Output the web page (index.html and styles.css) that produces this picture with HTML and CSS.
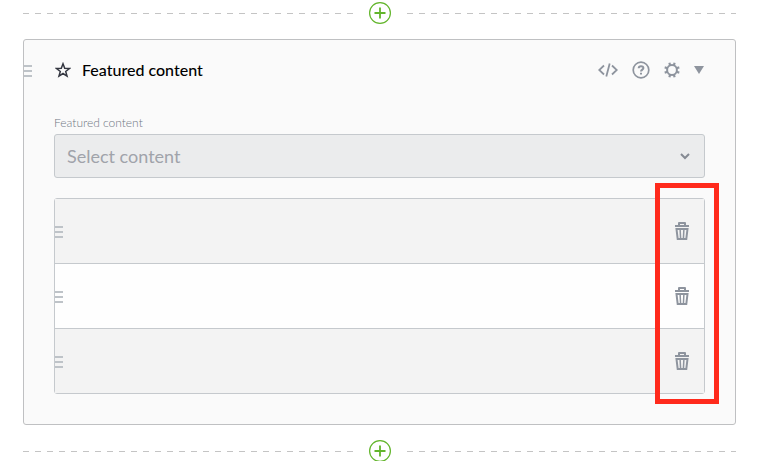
FILE: index.html
```html
<!DOCTYPE html>
<html lang="en">
<head>
  <meta charset="UTF-8">
  <meta name="viewport" content="width=device-width, initial-scale=1.0">
  <title>Featured content</title>
  <link rel="stylesheet" href="styles.css">
</head>
<body>
  <!-- Shared icons -->
  <svg class="sprite" aria-hidden="true">
    <symbol id="plus" viewBox="0 0 22 22">
      <circle cx="11" cy="11" r="10.4" fill="#fff" stroke="currentColor" stroke-width="1.2"/>
      <path d="M11 5.500v11M5.500 11h11" fill="none" stroke="currentColor" stroke-width="1.8"/>
    </symbol>
    <symbol id="trash" viewBox="0 0 14 18">
      <path d="M0 3h3V1q0-1 1-1h6q1 0 1 1v2h3v2H0zM5 2v1h4V2z" fill="currentColor" fill-rule="evenodd"/>
      <path d="M1.500 7h11L11.300 17H2.700z" fill="none" stroke="currentColor" stroke-width="2"/>
      <path d="M5.100 7l.5 10M8.900 7l-.5 10" fill="none" stroke="currentColor" stroke-width="1.5"/>
    </symbol>
  </svg>

  <main>
    <div class="divider">
      <span class="divider-line"></span>
      <button class="add-btn" type="button" aria-label="Add block above"><svg><use href="#plus"/></svg></button>
      <span class="divider-line"></span>
    </div>

    <section class="panel">
      <header class="panel-header">
        <button class="handle" type="button" aria-label="Move block"></button>
        <svg class="star" viewBox="0 0 16 16" aria-hidden="true">
          <path d="M8 1.800l1.700 4.500 4.800.2-3.800 3 1.300 4.600L8 11.500l-4 2.600 1.300-4.600-3.800-3 4.800-.2z" fill="none" stroke="currentColor" stroke-width="1.5"/>
        </svg>
        <h2>Featured content</h2>
        <div class="tools">
          <button type="button" aria-label="View code">
            <svg width="20" height="14" viewBox="0 0 20 14" fill="none" stroke="currentColor" stroke-width="1.8">
              <path d="M6 2.500L1.200 7 6 11.500M14 2.500L18.800 7 14 11.500M11.700.5L8.300 13.500"/>
            </svg>
          </button>
          <button type="button" aria-label="Help">
            <svg width="18" height="18" viewBox="0 0 18 18" fill="none" stroke="currentColor">
              <circle cx="9" cy="9" r="7.800" stroke-width="1.700"/>
              <path d="M6.700 7.200C6.700 4.500 11.400 4.500 11.400 7.100 11.400 8.600 9 8.700 9 10.600M9 11.700v1.800" stroke-width="2"/>
            </svg>
          </button>
          <button type="button" aria-label="Settings">
            <svg width="16" height="16" viewBox="0 0 16 16" fill="none" stroke="currentColor">
              <circle cx="8" cy="8" r="4.900" stroke-width="2"/>
              <path d="M6.200 3.700L5.400.7M9.800 3.700l.8-3M6.200 12.300l-.8 3M9.800 12.300l.8 3M3.700 6.200L.7 5.400M3.700 9.800l-3 .8M12.300 6.200l3-.8M12.300 9.800l3 .8" stroke-width="2.200"/>
            </svg>
          </button>
          <button type="button" aria-label="Collapse">
            <svg width="10" height="8" viewBox="0 0 10 8" fill="currentColor"><path d="M0 0h10L5 8z"/></svg>
          </button>
        </div>
      </header>

      <div class="panel-body">
        <label for="content">Featured content</label>
        <div class="select-wrap">
          <select id="content" disabled>
            <option>Select content</option>
          </select>
          <svg class="chevron" viewBox="0 0 10 7" aria-hidden="true">
            <path d="M1 1l4 4 4-4" fill="none" stroke="currentColor" stroke-width="2"/>
          </svg>
        </div>

        <div class="list-wrap">
          <ul class="items">
            <li>
              <button class="handle" type="button" aria-label="Move item 1"></button>
              <button class="delete-btn" type="button" aria-label="Delete item 1"><svg><use href="#trash"/></svg></button>
            </li>
            <li>
              <button class="handle" type="button" aria-label="Move item 2"></button>
              <button class="delete-btn" type="button" aria-label="Delete item 2"><svg><use href="#trash"/></svg></button>
            </li>
            <li>
              <button class="handle" type="button" aria-label="Move item 3"></button>
              <button class="delete-btn" type="button" aria-label="Delete item 3"><svg><use href="#trash"/></svg></button>
            </li>
          </ul>
          <div class="highlight"></div>
        </div>
      </div>
    </section>

    <div class="divider">
      <span class="divider-line"></span>
      <button class="add-btn" type="button" aria-label="Add block below"><svg><use href="#plus"/></svg></button>
      <span class="divider-line"></span>
    </div>
  </main>
</body>
</html>
```
FILE: styles.css
```css
* {
  box-sizing: border-box;
  margin: 0;
  padding: 0;
}

body {
  font-family: Lato, "Open Sans", sans-serif;
  background-color: #fff;
  color: #000;
  overflow: hidden;
}

main {
  padding: 2px 31px 0 23px;
}

button {
  display: block;
  background: none;
  border: none;
  color: inherit;
  cursor: pointer;
}

svg {
  display: block;
}

.sprite {
  display: none;
}

/* Dashed line with the add button */
.divider {
  display: flex;
  align-items: center;
  gap: 16px;
}

.divider-line {
  flex: 1;
  height: 1px;
  background: repeating-linear-gradient(to right, #c4c4c4 0 6px, transparent 6px 12px);
}

.add-btn {
  color: #62b52b;
}

.add-btn svg {
  width: 22px;
  height: 22px;
}

/* Panel */
.panel {
  margin: 15px 0;
  background-color: #fafafa;
  border: 1px solid #bfc0c2;
  border-radius: 3px;
}

.panel-header {
  display: flex;
  align-items: center;
  height: 60px;
  padding-right: 31px;
}

.handle {
  width: 8px;
  height: 12px;
  background: repeating-linear-gradient(to bottom, #bec3c8 0 2px, transparent 2px 5px);
  cursor: move;
}

.panel-header .handle,
.items .handle {
  margin-top: 2px;
}

.star {
  width: 16px;
  height: 16px;
  margin: 0 11px 0 23px;
  color: #343741;
}

h2 {
  font-size: 16px;
  font-weight: 500;
  line-height: 20px;
}

.tools {
  display: flex;
  align-items: center;
  gap: 14px;
  margin-left: auto;
  color: #8e949e;
}

.panel-body {
  padding: 16px 30px 30px;
}

label {
  display: block;
  font-size: 12px;
  font-weight: 300;
  line-height: 14px;
  margin-bottom: 4px;
  color: #707783;
}

.select-wrap {
  position: relative;
}

select {
  display: block;
  width: 100%;
  height: 44px;
  padding: 0 32px 0 12px;
  appearance: none;
  background-color: #ebeced;
  border: 1px solid #c5c9cd;
  border-radius: 3px;
  font-family: inherit;
  font-size: 18px;
  color: #a0a3aa;
  opacity: 1;
}

.chevron {
  position: absolute;
  top: 19px;
  right: 15px;
  width: 10px;
  height: 7px;
  color: #858a93;
  pointer-events: none;
}

/* Item list */
.list-wrap {
  position: relative;
  margin-top: 20px;
}

.items {
  list-style: none;
  background-color: #fefefe;
  border: 1px solid #c5c9cd;
  border-radius: 3px;
}

.items li {
  display: flex;
  align-items: center;
  justify-content: space-between;
  height: 65px;
  padding-right: 15px;
  border-bottom: 1px solid #c5c9cd;
}

.items li:last-child {
  height: 64px;
  border-bottom: none;
}

.items li:nth-child(odd) {
  background-color: #f3f3f3;
}

.delete-btn {
  color: #8e949e;
}

.delete-btn svg {
  width: 14px;
  height: 18px;
}

.highlight {
  position: absolute;
  top: -15px;
  right: -14px;
  bottom: -10px;
  width: 64px;
  border: 5px solid #ff2a1c;
  pointer-events: none;
}
```
